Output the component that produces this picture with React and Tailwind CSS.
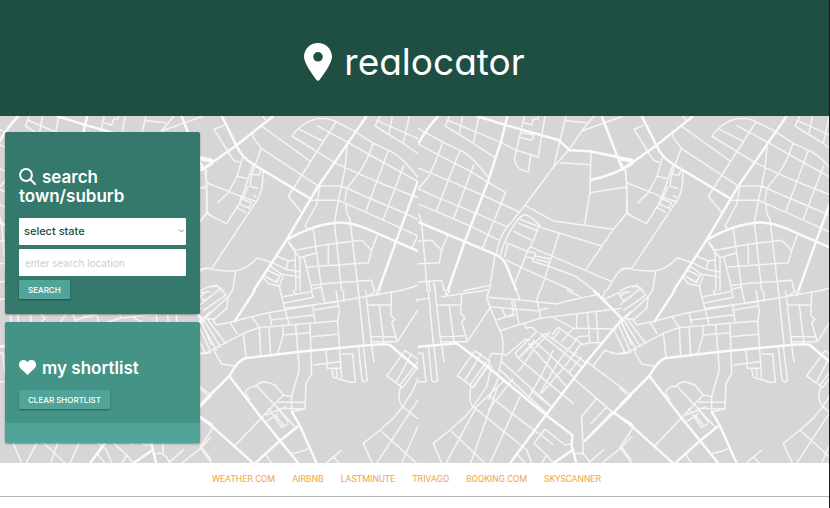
import React from "react";

const mapParts = [
  {
    transform: "translate(-8 0) scale(0.3333)",
    major:
      "M200 0L290 28L445 72L480 103L540 106L668 132M575 0L637 160M540 192Q610 178 668 142M292 0L275 70L233 200L165 375L113 525M24 318L160 375L255 415Q280 425 290 450L320 525M24 84Q55 30 85 0",
    minor:
      "M24 37L98 78L150 103Q182 115 235 185M24 84L95 122L180 165L233 198L287 230L218 395M98 78Q75 150 50 190L24 218M24 156L125 197L218 238L328 288M24 218L90 248L150 272L200 293L290 332M24 264L130 308L185 332L265 372M150 103L78 288M192 145L130 310M118 0L106 30L190 82L255 125M113 13L275 80L320 103L385 123L405 0M158 0L148 52M207 0L190 82M343 0L315 120Q310 158 355 168L362 118M343 20L365 27L370 10L385 8V0M335 50L372 56L365 73L332 65M468 0L430 158M468 14L530 20M552 0L515 45L478 100L425 160L345 268L290 335Q262 375 260 415M515 45L640 0M450 140L540 146M543 106L540 230L524 325M540 230L648 213M648 160L652 290L610 340L528 460M652 200L664 207M345 268L430 315L610 340M652 290L664 299M270 420Q288 360 310 330Q335 290 350 298Q370 305 395 335L575 390M330 310L390 333M325 322L385 345M310 345L365 373M385 335L365 385L355 400L315 500M288 380L350 405M293 385L283 425M360 392L605 497M447 353L392 525M287 432L335 455L490 525M365 435L415 450L495 480L555 525M350 405L377 412L367 438M350 422L420 440M375 420L420 428M590 525L620 475Q635 455 664 457M255 415L238 525M160 525L240 508M26 292L35 320L52 525M24 375L65 373L95 403L113 358M95 403L88 440L24 443M24 498L95 493L103 525M56 495L60 525M70 495L76 525",
  },
  {
    transform: "translate(202 0) scale(0.3333)",
    major:
      "M65 0L110 90Q125 125 165 148L335 250M220 0L110 88L5 162M0 130L40 137M0 137L10 160M500 0L445 80L355 210L258 375L160 525M258 373Q340 325 410 320Q450 317 500 338L654 405M654 195L585 385L535 525",
    minor:
      "M72 28L42 40L92 120Q100 137 118 138M188 0L197 12M157 50L160 65L184 97L165 148M184 30L332 136M184 97L352 208M158 50L185 28M127 125L112 180L85 230L52 262M158 148L122 255L80 323L20 293M20 200L125 242L172 258M15 160L20 200V290L0 317M0 215H18M108 180L145 188M189 165Q190 235 165 262L37 455M155 175L150 210L175 218M165 148L155 175L178 177L184 158M122 242L120 265L150 278M160 238L170 245M112 275L138 290M145 210L127 250L155 260L145 278M0 460L18 456Q70 468 107 464Q140 460 172 425L215 440M107 464L98 525M0 525Q50 495 70 525M35 515L50 507L62 525M275 60Q310 15 350 8Q390 5 410 18L465 46L517 80L565 103Q600 115 654 185M275 60L405 140L475 173L550 205L640 240L654 245M298 40L370 76M350 28L445 80L510 117L654 197M408 18L275 225L265 240L305 290M540 0L525 30L610 82L654 113M530 13L625 55L654 68M577 0L567 52M628 0L610 82M520 80Q500 140 475 173L440 218L435 255M442 82L435 160L415 255L403 320M565 103L497 288M612 147L550 310M355 210H425L500 243L615 292L654 310M330 253H415L500 290L600 335L654 360M360 210L350 265L315 330L325 340M440 262Q435 290 450 310L475 525M654 358L636 395M403 320L410 380L425 525M340 340L350 410L366 525M285 403L385 385L485 373L515 403L505 440L320 453M532 358L515 403M385 385V445M265 375L285 403L288 525M265 378Q285 410 300 425V525M300 425L350 410M312 425L337 525M335 508L390 502L515 493L523 525M340 518L365 513M230 420L265 435L258 460M218 440L258 460L300 467M265 435L285 432M210 450L245 475L300 483M202 463L240 480L230 500L195 480M190 485L205 503L238 510L250 480M245 475L225 500M238 510L242 525M600 525L654 508",
  },
  {
    transform: "translate(-8 174) scale(0.3333)",
    major:
      "M24 170L140 160L220 220L408 375L487 435L485 465L500 525M664 65L630 95L530 215L408 375L300 520M550 0L635 85M664 315L522 455M606 365L668 405M430 520L485 482",
    minor:
      "M24 30L55 25M55 0L70 163M75 0L93 163M95 20L235 0M106 0L110 18L120 0M80 45H152M155 8L152 70L165 85L155 95L172 155L240 53M118 45L132 160M93 140L170 137M92 155L172 155M24 190H38L48 275H24M55 168L65 270Q70 280 83 272L72 168M95 163L102 217M238 0L230 22L240 53L270 122Q290 160 265 250M235 22L330 30L440 42Q480 30 570 12M240 50L380 62L415 55M270 122L390 85L525 68L635 55M275 55L288 82M260 90L310 72L305 32M288 82L318 75M312 32L327 102M383 38L392 82M318 0L330 30M390 0L378 38M470 0L510 20M585 0L578 28M580 30L620 10L660 5M625 10L640 32L664 20M343 102L350 115Q365 105 380 125L315 190L325 205L405 130M430 82L490 115L620 117M500 68V112M532 65L540 160M558 62L565 160M490 115L455 155M445 112L520 165M445 112L425 135M405 130L530 220M390 130L520 235M370 150L495 265M355 160L470 290M420 125L375 175M450 120L430 145M535 137L505 140L480 175M575 158H540L510 165L465 230M500 185L475 215M515 200L475 250M480 170L445 215L390 310M355 325L395 255L430 180M375 150L325 205M360 150L345 148L290 195L245 190L235 210M325 205L490 340M275 215L425 350M265 235L410 370M370 180L325 245M460 235L395 310M360 300L430 355M530 215L664 315M585 180Q625 200 664 185M550 228L585 180M612 120L645 188M625 105L660 180M635 95L664 165M490 265L606 365L522 455M560 325L515 380L520 490M590 350L543 402M195 182L142 257L190 293L240 220M215 190L165 270M230 215L180 285M195 182L240 215L190 290M182 290Q175 340 190 350L230 290L245 225M190 350L165 380L120 420L70 460L95 520M190 350L350 480L365 520M120 420L225 520M285 270L200 350L108 520M265 265L235 330M310 265L235 360M265 285L180 525M330 320L240 520M240 320L385 430M405 417L372 460L410 495L430 520M405 417L465 465L485 462M388 430L430 465M320 490L345 520M410 495L395 520M490 495Q520 475 540 520M540 515L582 478M575 520L635 472L664 440M635 472L664 510M24 60L0 95M24 330L0 380",
  },
  {
    transform: "translate(202 174) scale(0.3333)",
    major:
      "M165 0L102 97M654 237L570 165Q550 160 510 165L300 185L135 205Q115 210 88 258L0 345M88 258L180 378L240 452L295 520M0 382L40 412L160 520M165 520L240 452L295 408M275 365L300 408L350 520M0 85L10 95",
    minor:
      "M0 20L20 5M0 45L55 0M10 62L78 15L65 0M20 80L85 20L98 0M85 20L80 55L42 88L8 85M0 93L50 182M8 85L62 172M20 85L78 162M35 85L50 105L90 97L112 132M90 97L155 80L205 68L340 45L470 25L610 0M0 190L20 188L130 130L175 113L330 100L413 93M155 80L178 112L182 195M208 68L215 105M42 182L65 222L105 228M130 130L138 202M207 113L212 195M250 110L248 140L232 195M240 0L255 58L268 105M248 20L330 5M250 40L340 22L333 0M255 55L415 35M213 90L340 75M338 45L345 95M343 60L413 48M248 135L330 128M287 105L298 240L275 318V365L315 357L318 280L335 250L330 100M332 140L413 133M365 0L375 40M408 0L418 65L413 95L425 265M430 0L432 35M280 0L285 15M475 0L492 163M497 0L515 163M500 20L525 5M528 0L532 18L540 0M500 45H572M575 8L572 75L585 88L575 97L592 155L654 60M538 45L552 160M513 140H588M510 155L590 155M378 182L382 235H425M340 225L420 215M395 237L400 262L450 277H466L458 192H425M408 237L412 262M475 170L486 270Q495 282 502 270L490 168M515 165L522 217M0 295L22 315M135 308Q150 285 165 290Q185 270 205 278L225 285L250 315L275 320M168 285L285 410M135 308L150 330M250 315L105 467M205 355L245 412L265 400M198 375L260 350M225 345L265 395M225 375L250 405M235 337H315M200 395L235 370M235 355L315 357M275 490Q310 485 325 475M40 412L0 472L35 520M195 490L215 520M378 520L425 480M400 500L418 520M615 182L560 258L608 293L654 230M635 190L590 275M654 215L600 285M615 182L654 208M602 290Q590 330 608 350L640 300L654 265M608 350L654 387M608 350L580 385L540 420L490 460L517 520M540 420L650 520M654 330L530 520M654 408L605 520M654 25L648 35",
  },
];

function StreetMap() {
  return (
    <svg className="absolute inset-0 h-full w-full" aria-hidden="true">
      <defs>
        <pattern id="streets" x="-2" y="0" width="420" height="348" patternUnits="userSpaceOnUse">
          <rect width="420" height="348" fill="#d6d6d6" />
          {mapParts.map((part) => (
            <g
              key={part.transform}
              transform={part.transform}
              fill="none"
              stroke="#f5f5f5"
              strokeLinejoin="round"
            >
              <path d={part.minor} strokeWidth="4.6" />
              <path d={part.major} strokeWidth="7.5" stroke="#fbfbfb" />
            </g>
          ))}
        </pattern>
      </defs>
      <rect width="100%" height="100%" fill="url(#streets)" />
    </svg>
  );
}

const buttonClass =
  "h-[19px] rounded-[1px] bg-[#51a499] px-[9px] text-[8px] leading-none font-medium text-white uppercase shadow-[0_1px_2px_rgba(0,0,0,0.35)]";

const links = [
  ["Weather.com", "https://weather.com"],
  ["Airbnb", "https://airbnb.com"],
  ["Lastminute", "https://lastminute.com"],
  ["Trivago", "https://trivago.com"],
  ["Booking.com", "https://booking.com"],
  ["Skyscanner", "https://skyscanner.com"],
];

export default function App() {
  return (
    <div className="min-h-screen border-r border-[#171717] bg-white font-['Inter','Liberation_Sans',sans-serif]">
      <header className="flex h-[116px] items-center justify-center gap-3 bg-[#1f4e42] pt-2 text-white">
        <svg className="h-[38px] w-7" viewBox="0 0 28 38" aria-hidden="true">
          <path
            fill="currentColor"
            fillRule="evenodd"
            d="M14 0C6.200 0 0 6.100 0 13.800C0 20.200 7.800 30.200 12.100 36.500Q14 39 15.900 36.500C20.200 30.200 28 20.200 28 13.800C28 6.100 21.800 0 14 0ZM14 9A4.800 4.800 0 1 1 14 18.600A4.800 4.800 0 1 1 14 9Z"
          />
        </svg>
        <h1 className="text-[37px] leading-10 [font-feature-settings:'cv11']">realocator</h1>
      </header>

      <main className="relative px-[5px] pt-4 pb-5">
        <StreetMap />
        <div className="relative flex w-[195px] flex-col gap-2">
          <section className="rounded-[2px] bg-[#35786c] px-[14px] pt-9 pb-[15px] shadow-[0_1px_2px_rgba(0,0,0,0.35)]">
            <h2 className="text-[17px] leading-[19px] font-semibold text-white">
              <svg className="mr-[6px] inline-block h-[17px] w-[17px] align-[-2px]" viewBox="0 0 17 17" fill="none" stroke="currentColor" strokeWidth="2" strokeLinecap="round" aria-hidden="true">
                <circle cx="7" cy="7" r="5.900" />
                <path d="M11.300 11.300L16 16" />
              </svg>
              search town/suburb
            </h2>
            <form className="mt-3" onSubmit={(e) => e.preventDefault()}>
              <div className="relative">
                <select
                  aria-label="State"
                  className="block h-[27px] w-full appearance-none rounded-[1px] bg-white px-[5px] text-[11px] font-medium text-[#1f4e42]"
                >
                  <option>select state</option>
                </select>
                <svg className="pointer-events-none absolute top-[11px] right-[1px] h-1 w-[7px]" viewBox="0 0 7 4" fill="none" stroke="#789b93" aria-hidden="true">
                  <path d="M1 0.500L3.500 3L6 0.500" />
                </svg>
              </div>
              <input
                type="text"
                aria-label="Search location"
                placeholder="enter search location"
                className="mt-1 block h-[27px] w-full rounded-[1px] bg-white px-[6px] text-[10px] placeholder:text-[#cdcdcd]"
              />
              <button type="submit" className={`mt-1 block ${buttonClass}`}>
                Search
              </button>
            </form>
          </section>

          <section className="overflow-hidden rounded-[2px] bg-[#439386] shadow-[0_1px_2px_rgba(0,0,0,0.35)]">
            <div className="px-[14px] pt-9 pb-[14px]">
              <h2 className="text-[17px] leading-5 font-semibold text-white">
                <svg className="mr-[6px] inline-block h-[15px] w-[17px] align-[-1px]" viewBox="0 0 17 15" aria-hidden="true">
                  <path fill="currentColor" d="M8.500 15L1.300 8.300C-1 5.800-.2 1.900 2.300.6C4.500-.6 7 .2 8.500 2.200C10-.2 12.500-.6 14.700.6C17.200 1.900 18 5.800 15.700 8.300Z" />
                </svg>
                my shortlist
              </h2>
              <button type="button" className={`mt-3 block ${buttonClass}`}>
                Clear shortlist
              </button>
            </div>
            <div className="h-5 bg-[#51a499]" />
          </section>
        </div>
      </main>

      <footer className="border-b border-[#b5b5b5]">
        <nav className="flex h-[33px] items-center justify-center gap-[17px] pr-4 font-['Roboto','Liberation_Sans',sans-serif] text-[9px] text-[#f1a544] uppercase">
          {links.map(([label, href]) => (
            <a key={label} href={href}>
              {label}
            </a>
          ))}
        </nav>
      </footer>
    </div>
  );
}
